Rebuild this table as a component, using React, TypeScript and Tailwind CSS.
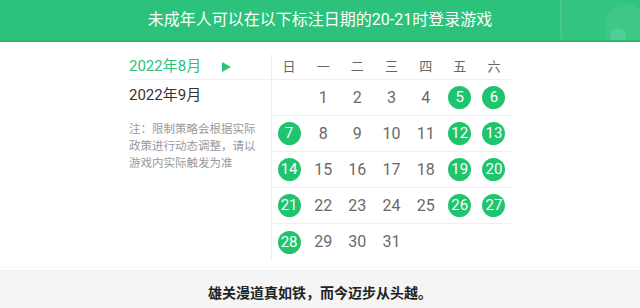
import React from "react";

const WEEK = ["日", "一", "二", "三", "四", "五", "六"];
const MARKED = new Set([5, 6, 7, 12, 13, 14, 19, 20, 21, 26, 27, 28]);

// August 2022 starts on a Monday -> one empty cell in front
const cells: (number | null)[] = [null, ...Array.from({ length: 31 }, (_, i) => i + 1)];
const rows: (number | null)[][] = [];
for (let i = 0; i < cells.length; i += 7) rows.push(cells.slice(i, i + 7));

function DayCell({ day }: { day: number | null }) {
  if (day === null) return <div />;
  const on = MARKED.has(day);
  return (
    <div className="flex items-center justify-center">
      {on ? (
        <span className="flex h-[23px] w-[23px] items-center justify-center rounded-full bg-[#20c46f] text-[15px] text-white">
          {day}
        </span>
      ) : (
        <span className="text-[16px] text-[#6a6a6a]">{day}</span>
      )}
    </div>
  );
}

export default function App() {
  return (
    <div
      className="flex h-[308px] w-[640px] flex-col overflow-hidden bg-white"
      style={{ fontFamily: 'Roboto, "Noto Sans CJK SC", sans-serif' }}
    >
      {/* header banner */}
      <div className="relative flex h-[42px] shrink-0 items-center justify-center overflow-hidden border-b-2 border-[#27b873] bg-[#2cc27c]">
        <div className="absolute -right-[40px] -top-[70px] h-[160px] w-[120px] rounded-full border-[2px] border-white/10 bg-white/[0.04]" />
        <div className="absolute right-[-6px] top-[4px] h-[60px] w-[40px] rounded-full bg-white/[0.06]" />
        <div className="absolute right-[14px] top-[28px] h-[16px] w-[16px] rounded-full bg-white/10" />
        <span className="relative text-[16px] text-white">未成年人可以在以下标注日期的20-21时登录游戏</span>
      </div>

      {/* calendar area */}
      <div className="flex h-[228px] shrink-0 justify-center pt-3">
        <div className="w-[142px]">
          <div className="flex h-[26px] items-center border-b border-[#efefef]">
            <span className="text-[15px] text-[#2cc27c]">2022年8月</span>
            <svg className="ml-[21px]" width="9" height="10" viewBox="0 0 9 10">
              <path d="M0 0 L9 5 L0 10 Z" fill="#2cc27c" />
            </svg>
          </div>
          <div className="flex h-[30px] items-center text-[15px] text-[#333]">2022年9月</div>
          <p className="mt-[11px] w-[132px] text-[11.5px] leading-[17px] text-[#9a9a9a]">
            注：限制策略会根据实际政策进行动态调整，请以游戏内实际触发为准
          </p>
        </div>

        <div className="h-[206px] w-[240px] border-l border-[#efefef]">
          <div className="grid h-[26px] grid-cols-7 border-b border-[#efefef]">
            {WEEK.map((w) => (
              <div key={w} className="flex items-center justify-center text-[13px] text-[#666]">
                {w}
              </div>
            ))}
          </div>
          {rows.map((r, i) => (
            <div
              key={i}
              className={`grid h-[36px] grid-cols-7 ${i < rows.length - 1 ? "border-b border-[#efefef]" : ""}`}
            >
              {Array.from({ length: 7 }, (_, j) => (
                <DayCell key={j} day={r[j] ?? null} />
              ))}
            </div>
          ))}
        </div>
      </div>

      {/* quote footer */}
      <div className="flex flex-1 items-center justify-center border-t border-[#f0f0f0] bg-[#f5f5f5] pt-[8px]">
        <span className="text-[14px] font-bold text-[#222]">雄关漫道真如铁，而今迈步从头越。</span>
      </div>
    </div>
  );
}
